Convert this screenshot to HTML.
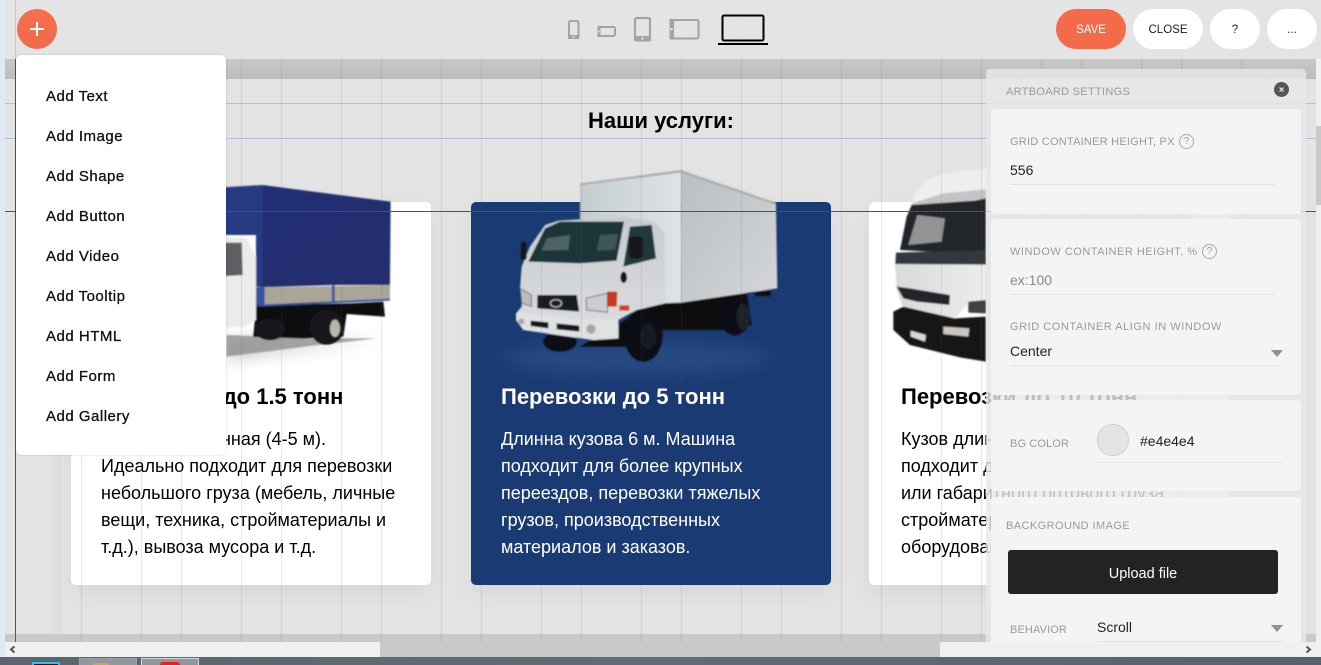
<!DOCTYPE html>
<html lang="ru"><head><meta charset="utf-8"><title>Artboard</title>
<style>
html,body{margin:0;padding:0;width:1321px;height:665px;overflow:hidden;background:#e4e4e4;font-family:"Liberation Sans",sans-serif}
div,span{position:absolute;box-sizing:border-box;white-space:nowrap}
.card{top:202px;width:360px;height:383px;border-radius:5px;background:#fff;box-shadow:0 8px 20px rgba(0,0,0,.05)}
.h{font-size:22px;font-weight:bold;line-height:26px;color:#000}
.t{font-size:18px;line-height:27px;color:#000}
.m{left:46px;font-size:15px;line-height:20px;color:#111;letter-spacing:.5px;-webkit-text-stroke:.3px #111}
.pill{top:9px;height:40px;border-radius:20px;background:#fff;color:#222;font-size:11.5px;line-height:42px;text-align:center}
.block{left:991px;width:310px;background:#f4f4f4;border-radius:4px}
.lab{font-size:11px;line-height:14px;color:#9a9a9a}
.val{font-size:14px;line-height:18px;color:#222}
.ln{height:1px;background:#e2e2e2}
.arr{width:0;height:0;border-left:6px solid transparent;border-right:6px solid transparent;border-top:7px solid #929292}
.q{width:15px;height:15px;border:1px solid #aaa;border-radius:50%;font-size:10px;line-height:13px;text-align:center;color:#999}
</style></head><body>

<!-- canvas -->
<div style="left:0;top:0;width:5px;height:657px;background:#e2e9f4"></div>
<div style="left:5px;top:59px;width:1316px;height:20px;background:linear-gradient(#c8c8c8,#bcbcbc)"></div>
<div style="left:5px;top:79px;width:56px;height:555px;background:linear-gradient(90deg,#e4e4e4 75%,#dcdcdc)"></div>
<div style="left:61px;top:79px;width:1260px;height:555px;background:#e3e3e3"></div>
<div style="left:5px;top:634px;width:1316px;height:8px;background:#c9c9c9"></div>

<!-- cards -->
<div class="card" style="left:71px"></div>
<div class="card" style="left:471px;background:#1a3a73"></div>
<div class="card" style="left:869px"></div>

<div style="left:588px;top:107px;font-size:22px;font-weight:bold;line-height:27px;color:#000">Наши услуги:</div>

<!-- trucks -->
<svg style="position:absolute;left:0;top:0" width="1321" height="665" viewBox="0 0 1321 665">
<defs>
<filter id="b" x="-5%" y="-5%" width="110%" height="110%"><feGaussianBlur stdDeviation="2.4"/></filter>
<filter id="b2" x="-20%" y="-50%" width="140%" height="200%"><feGaussianBlur stdDeviation="24"/></filter>
<linearGradient id="bx" x1="0" x2="1" y1="0" y2="0"><stop offset="0" stop-color="#c4ccd0"/><stop offset="1" stop-color="#dfe3e5"/></linearGradient>
<linearGradient id="bx2" x1="0" x2="1" y1="0" y2="1"><stop offset="0" stop-color="#b9bec1"/><stop offset="1" stop-color="#d4d6d8"/></linearGradient>
<linearGradient id="tp" x1="0" x2="1" y1="0" y2="1"><stop offset="0" stop-color="#222f74"/><stop offset="1" stop-color="#232d6c"/></linearGradient>
<linearGradient id="hd" x1="0" x2="0" y1="0" y2="1"><stop offset="0" stop-color="#c8cbce"/><stop offset="1" stop-color="#dcdee0"/></linearGradient>
<linearGradient id="c3" x1="0" x2="1" y1="0" y2="0"><stop offset="0" stop-color="#d9d9d9"/><stop offset="1" stop-color="#ececec"/></linearGradient>
</defs>
<!-- truck 2 -->
<g transform="translate(480 160) scale(.3333)">
<ellipse cx="470" cy="595" rx="400" ry="50" fill="#3a6298" opacity=".4" filter="url(#b2)"/>
<g filter="url(#b)">
<polygon points="530,425 800,398 815,495 720,510 540,510 440,560 300,560" fill="#070a10"/>
<ellipse cx="765" cy="470" rx="45" ry="56" fill="#0b0d12"/>
<ellipse cx="790" cy="470" rx="20" ry="40" fill="#1c2026"/>
<rect x="825" y="392" width="48" height="16" fill="#0b0d12"/>
<polygon points="300,70 602,30 604,428 530,430 520,185 300,180" fill="url(#bx)"/>
<polygon points="602,30 888,128 892,385 604,428" fill="url(#bx2)"/>
<polygon points="300,70 602,30 888,128 885,134 602,38 300,76" fill="#a9afb3"/>
<ellipse cx="240" cy="545" rx="50" ry="30" fill="#0c0e13"/>
<ellipse cx="490" cy="525" rx="58" ry="80" fill="#0b0d12"/>
<ellipse cx="505" cy="530" rx="24" ry="38" fill="#191c22"/>
<polygon points="235,182 430,170 520,185 553,215 555,430 470,450 415,480 415,535 340,540 130,510 108,480 108,460 125,440 120,385 125,320 150,260 195,195" fill="url(#hd)"/>
<polygon points="108,460 125,458 300,478 415,478 415,535 340,540 130,510 108,480" fill="#dfe1e3"/>
<polygon points="145,305 195,205 240,185 432,185 410,302 300,310" fill="#1d3438"/>
<polygon points="200,235 270,225 265,270 185,272" fill="#4e6466"/>
<polygon points="360,225 415,222 405,270 350,272" fill="#3f5558"/>
<polygon points="430,320 450,200 515,195 528,295" fill="#23393d"/>
<rect x="447" y="230" width="42" height="65" rx="10" fill="#17171b"/>
<rect x="122" y="245" width="18" height="55" rx="7" fill="#17171b"/>
<ellipse cx="431" cy="352" rx="10" ry="17" fill="#17171b"/>
<polygon points="172,405 290,405 298,455 172,445" fill="#191b20"/>
<ellipse cx="228" cy="430" rx="17" ry="11" fill="none" stroke="#ccc" stroke-width="3"/>
<polygon points="318,415 382,400 382,457 320,450" fill="#c9cdd1" stroke="#333" stroke-width="2"/>
<polygon points="382,395 412,395 410,440 382,440" fill="#c7371d"/>
<rect x="418" y="436" width="30" height="16" fill="#d0401e"/>
<polygon points="120,385 155,405 155,440 125,430" fill="#b8bcc0" stroke="#444" stroke-width="2"/>
<polygon points="152,482 205,487 205,505 152,498" fill="#15171b"/>
<polygon points="230,490 298,497 298,515 230,508" fill="#15171b"/>
<circle cx="333" cy="507" r="14" fill="#a5a8ab"/>
<circle cx="124" cy="484" r="9" fill="#a5a8ab"/>
</g></g>
<!-- truck 1 -->
<g transform="translate(170 170) scale(.3333)">
<polygon points="170,505 420,515 640,505 420,535 170,570" fill="#aaa" opacity=".6" filter="url(#b2)"/>
<polygon points="170,495 420,505 620,505 420,528 170,560" fill="#8a8a8a" opacity=".75" filter="url(#b)"/>
<g filter="url(#b)">
<polygon points="258,405 540,400 640,395 645,440 530,432 520,500 400,505 250,500" fill="#0c0d11"/>
<ellipse cx="300" cy="478" rx="46" ry="32" fill="#15161a"/>
<ellipse cx="470" cy="472" rx="50" ry="52" fill="#17181c"/>
<ellipse cx="495" cy="475" rx="24" ry="40" fill="#15161a"/>
<ellipse cx="495" cy="475" rx="15" ry="26" fill="#b9b7ac"/>
<polygon points="278,45 662,95 660,345 490,345 270,352" fill="url(#tp)"/>
<polygon points="60,58 278,45 278,352 258,350 258,195 60,195" fill="#263a84"/>
<polygon points="258,352 660,345 660,388 270,408 258,405" fill="#a9a698"/>
<polygon points="258,352 284,352 284,408 258,408" fill="#3552a0"/>
<rect x="486" y="346" width="8" height="52" fill="#3552a0"/>
<polygon points="270,404 660,386 660,392 270,410" fill="#3552a0"/>
<polygon points="60,195 230,205 258,260 258,450 225,470 60,478" fill="#ebebeb"/>
<polygon points="60,218 215,218 218,315 60,325" fill="#5f5f64"/>
</g></g>
<!-- truck 3 -->
<g transform="translate(860 160) scale(.3333)">
<g filter="url(#b)">
<polygon points="378,100 1000,100 1000,600 378,600" fill="#dcdcdc"/>
<polygon points="155,130 165,105 200,60 250,40 378,25 1000,25 1000,165 500,165 378,100" fill="#eeeeee"/>
<polygon points="155,130 250,100 378,88 378,118 155,140" fill="#c4c4c4"/>
<polygon points="120,270 140,170 155,135 345,122 378,115 378,275 300,280" fill="#24272c"/>
<polygon points="172,165 255,175 245,245 145,255" fill="#949292"/>
<polygon points="105,310 378,310 378,430 320,435 285,475 130,445 110,390" fill="url(#c3)"/>
<polygon points="108,278 378,270 378,314 106,312" fill="#31373d"/>
<polygon points="110,380 150,385 270,405 268,435 170,425 130,415" fill="#22252a"/>
<polygon points="325,425 378,420 378,460 325,458" fill="#3c3f44"/>
<polygon points="100,455 130,440 285,475 378,470 378,605 300,592 150,555 100,510" fill="#121317"/>
<polygon points="152,512 198,525 195,545 152,530" fill="#d8d8d8"/>
<polygon points="250,500 328,505 325,530 250,522" fill="#ccc6c2"/>
</g></g>
</svg>

<!-- card text -->
<div class="h" style="left:101px;top:384px">Перевозки до 1.5 тонн</div>
<div class="t" style="left:26px;top:426px;width:300px;text-align:right">Кузов средняя, длинная (4-5 м).</div>
<div class="t" style="left:101px;top:453px">Идеально подходит для перевозки<br>небольшого груза (мебель, личные<br>вещи, техника, стройматериалы и<br>т.д.), вывоза мусора и т.д.</div>
<div class="h" style="left:501px;top:384px;color:#fff">Перевозки до 5 тонн</div>
<div class="t" style="left:501px;top:426px;color:#fff">Длинна кузова 6 м. Машина<br>подходит для более крупных<br>переездов, перевозки тяжелых<br>грузов, производственных<br>материалов и заказов.</div>
<div class="h" style="left:901px;top:384px">Перевозки до 10 тонн</div>
<div class="t" style="left:901px;top:426px">Кузов длинной 7-8 м. Машина<br>подходит для перевозки мебели<br>или габаритного оптового груза<br>стройматериалов, техники и<br>оборудования.</div>

<!-- grid overlay -->
<svg style="position:absolute;left:0;top:0" width="1321" height="665" viewBox="0 0 1321 665">
<g stroke="#4a4ae0" stroke-opacity=".14" stroke-width="1">
<path d="M81.500 59V642M141.500 59V642M181.500 59V642M241.500 59V642M281.500 59V642M341.500 59V642M381.500 59V642M441.500 59V642M481.500 59V642M541.500 59V642M581.500 59V642M641.500 59V642M681.500 59V642M741.500 59V642M781.500 59V642M841.500 59V642M881.500 59V642M941.500 59V642M981.500 59V642M1041.500 59V642M1081.500 59V642M1141.500 59V642M1181.500 59V642M1241.500 59V642"/>
<path d="M5 103.500H1321M5 138.500H1321" stroke-opacity=".28"/>
</g>
<g stroke="#000" stroke-opacity=".012"><path d="M81.500 0V59M141.500 0V59M181.500 0V59M241.500 0V59M281.500 0V59M341.500 0V59M381.500 0V59M441.500 0V59M481.500 0V59M541.500 0V59M581.500 0V59M641.500 0V59M681.500 0V59M741.500 0V59M781.500 0V59"/></g>
<path d="M15.500 59V642" stroke="#e01818"/>
<path d="M15.500 0V59" stroke="#e01818" stroke-opacity=".2"/>
<path d="M5 211.500H1316" stroke="#d8141c"/>
</svg>

<!-- scrollbars -->
<div style="left:5px;top:642px;width:1316px;height:15px;background:#f0f0f0"></div>
<div style="left:380px;top:642px;width:560px;height:15px;background:#c9c9c9"></div>
<svg style="position:absolute;left:8px;top:645px" width="9" height="9" viewBox="0 0 9 9"><path d="M6.500 1.500L3 4.500L6.500 7.500" fill="none" stroke="#555" stroke-width="2"/></svg>
<svg style="position:absolute;left:1304px;top:645px" width="9" height="9" viewBox="0 0 9 9"><path d="M2.500 1.500L6 4.500L2.500 7.500" fill="none" stroke="#555" stroke-width="2"/></svg>
<div style="left:1316px;top:59px;width:5px;height:583px;background:#f0f0f0"></div>
<div style="left:1316px;top:126px;width:5px;height:79px;background:#c9c9c9"></div>

<!-- taskbar -->
<div style="left:0;top:657px;width:1321px;height:8px;background:linear-gradient(90deg,#596670,#606d78 50%,#55626e)"></div>
<div style="left:32px;top:662px;width:28px;height:3px;background:#111;border:2px solid #25c4f4;border-bottom:0"></div>
<div style="left:79px;top:658px;width:58px;height:7px;background:#8f9a9c;border:1px solid #9aa2a5;border-bottom:0"></div>
<div style="left:93px;top:663px;width:16px;height:2px;background:#c9a850"></div>
<div style="left:141px;top:658px;width:58px;height:7px;background:#8e979b;border:1px solid #d5d8da;border-bottom:0"></div>
<div style="left:160px;top:662px;width:20px;height:3px;border-radius:10px 10px 0 0;background:#ee1c25"></div>

<!-- top toolbar -->
<div style="left:17px;top:9px;width:40px;height:40px;border-radius:50%;background:linear-gradient(#f66f4e,#ee6b4b)"></div>
<svg style="position:absolute;left:17px;top:9px" width="40" height="40" viewBox="0 0 40 40"><path d="M20 13V27M13 20H27" stroke="#fff" stroke-width="2"/></svg>

<svg style="position:absolute;left:555px;top:5px" width="225" height="50" viewBox="0 0 225 50">
<g fill="none" stroke="#a3a3a3">
<rect x="14" y="16" width="9.500" height="17" rx="1.500" stroke-width="2"/>
<rect x="43.500" y="22" width="16.500" height="9" rx="1.500" stroke-width="2"/>
<rect x="80" y="13" width="15" height="22.500" rx="1.500" stroke-width="2.200"/>
<rect x="115.500" y="15" width="28" height="18.500" rx="1.500" stroke-width="2"/>
</g>
<g fill="#a3a3a3">
<rect x="13" y="30" width="11" height="4"/><rect x="42.500" y="21" width="3" height="11"/>
<rect x="79" y="31" width="17" height="5"/><rect x="114.500" y="14" width="4.500" height="20.500"/>
</g>
<g fill="#e4e4e4"><circle cx="18.500" cy="32" r="1"/><circle cx="44" cy="26.500" r="1"/><circle cx="87.500" cy="33.500" r="1.200"/><circle cx="116.500" cy="24" r="1.300"/></g>
<rect x="167.500" y="10.500" width="41" height="25" rx="1.500" fill="none" stroke="#000" stroke-width="2"/>
<rect x="163" y="38" width="50" height="2" fill="#000"/>
</svg>

<div class="pill" style="left:1056px;width:70px;background:#f46b4a;color:#fff">SAVE</div>
<div class="pill" style="left:1133px;width:70px">CLOSE</div>
<div class="pill" style="left:1210px;width:50px">?</div>
<div class="pill" style="left:1267px;width:50px">...</div>

<!-- settings panel -->
<div style="left:986px;top:69px;width:320px;height:573px;border-radius:4px 4px 0 0;background:rgba(232,232,232,.82)"></div>
<div class="lab" style="left:1006px;top:85px;letter-spacing:.3px">ARTBOARD SETTINGS</div>
<div style="left:1273.500px;top:82px;width:15px;height:15px;border-radius:50%;background:#555"></div>
<svg style="position:absolute;left:1273.500px;top:82px" width="15" height="15" viewBox="0 0 15 15"><path d="M5.500 5.500L9.500 9.500M9.500 5.500L5.500 9.500" stroke="#ddd" stroke-width="1.300"/></svg>

<div class="block" style="top:109px;height:105px"></div>
<div class="lab" style="left:1010px;top:135px;letter-spacing:.24px">GRID CONTAINER HEIGHT, PX</div>
<div class="q" style="left:1179px;top:134px">?</div>
<div class="val" style="left:1010px;top:161px">556</div>
<div class="ln" style="left:1010px;top:184px;width:265px"></div>

<div class="block" style="top:219px;height:176px"></div>
<div class="lab" style="left:1010px;top:245px;letter-spacing:.5px">WINDOW CONTAINER HEIGHT, %</div>
<div class="q" style="left:1202px;top:244px">?</div>
<div class="val" style="left:1010px;top:271px;color:#8a8a8a">ex:100</div>
<div class="ln" style="left:1010px;top:294px;width:265px"></div>
<div class="lab" style="left:1010px;top:320px;letter-spacing:.55px">GRID CONTAINER ALIGN IN WINDOW</div>
<div class="val" style="left:1010px;top:342px">Center</div>
<div class="arr" style="left:1271px;top:350px"></div>
<div class="ln" style="left:1010px;top:365px;width:272px"></div>

<div class="block" style="top:400px;height:91px"></div>
<div class="lab" style="left:1010px;top:437px;letter-spacing:.12px">BG COLOR</div>
<div style="left:1097px;top:424px;width:32px;height:32px;border-radius:50%;background:#e4e4e4;border:1px solid #cfcfcf"></div>
<div class="val" style="left:1140px;top:432px">#e4e4e4</div>
<div class="ln" style="left:1097px;top:462px;width:185px"></div>

<div class="block" style="top:497px;height:145px;border-radius:4px 4px 0 0"></div>
<div class="lab" style="left:1006px;top:519px;letter-spacing:.42px">BACKGROUND IMAGE</div>
<div style="left:1008px;top:550px;width:270px;height:44px;border-radius:3px;background:#232323;color:#fff;font-size:14.5px;line-height:49px;text-align:center">Upload file</div>
<div class="lab" style="left:1010px;top:623px;letter-spacing:.12px">BEHAVIOR</div>
<div class="val" style="left:1097px;top:618px">Scroll</div>
<div class="arr" style="left:1271px;top:625px"></div>
<div class="ln" style="left:1097px;top:641px;width:185px"></div>

<!-- add menu -->
<div style="left:16px;top:55px;width:210px;height:400px;border-radius:5px;background:#fff;box-shadow:0 0 2px rgba(0,0,0,.2)"></div>
<div class="m" style="top:87px">Add Text</div>
<div class="m" style="top:127px">Add Image</div>
<div class="m" style="top:167px">Add Shape</div>
<div class="m" style="top:207px">Add Button</div>
<div class="m" style="top:247px">Add Video</div>
<div class="m" style="top:287px">Add Tooltip</div>
<div class="m" style="top:327px">Add HTML</div>
<div class="m" style="top:367px">Add Form</div>
<div class="m" style="top:407px">Add Gallery</div>
</body></html>
